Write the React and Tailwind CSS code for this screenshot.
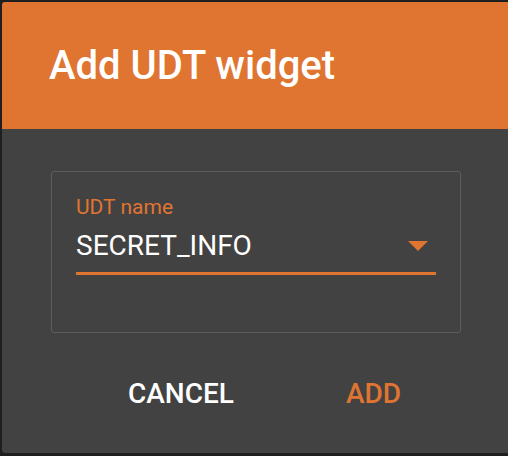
export default function App() {
  return (
    <div
      className="w-[508px] h-[456px] bg-[#1f1f1f] pt-[2px] pl-[2px] overflow-hidden"
      style={{ fontFamily: "Roboto, 'Liberation Sans', sans-serif" }}
    >
      <div className="w-[540px] h-[451px] bg-[#424242] rounded-[3px] overflow-hidden flex flex-col">
        <div className="h-[127px] bg-[#e07431] flex items-center pl-[47px]">
          <h1 className="text-[40px] font-medium text-white">Add UDT widget</h1>
        </div>
        <div className="pl-[49px] pt-[42px]">
          <div className="w-[410px] h-[162px] border border-[#5e5e5e] rounded-[3px] pl-[24px] pr-[24px] pt-[23px]">
            <div className="text-[21px] text-[#e07431] leading-[24px]">UDT name</div>
            <div className="flex items-center justify-between mt-[11px] h-[32px]">
              <span className="text-[28px] text-white leading-[32px]">SECRET_INFO</span>
              <svg width="20" height="10" viewBox="0 0 20 10" className="mr-[8px]">
                <polygon points="0,0 20,0 10,10" fill="#e07431" />
              </svg>
            </div>
            <div className="mt-[10px] h-[3px] bg-[#e07431]" />
          </div>
          <div className="flex items-center mt-[45px] pl-[77px]">
            <span className="text-[28px] font-medium text-white leading-[32px]">CANCEL</span>
            <span className="text-[28px] font-medium text-[#e07431] leading-[32px] ml-[112px]">ADD</span>
          </div>
        </div>
      </div>
    </div>
  );
}
